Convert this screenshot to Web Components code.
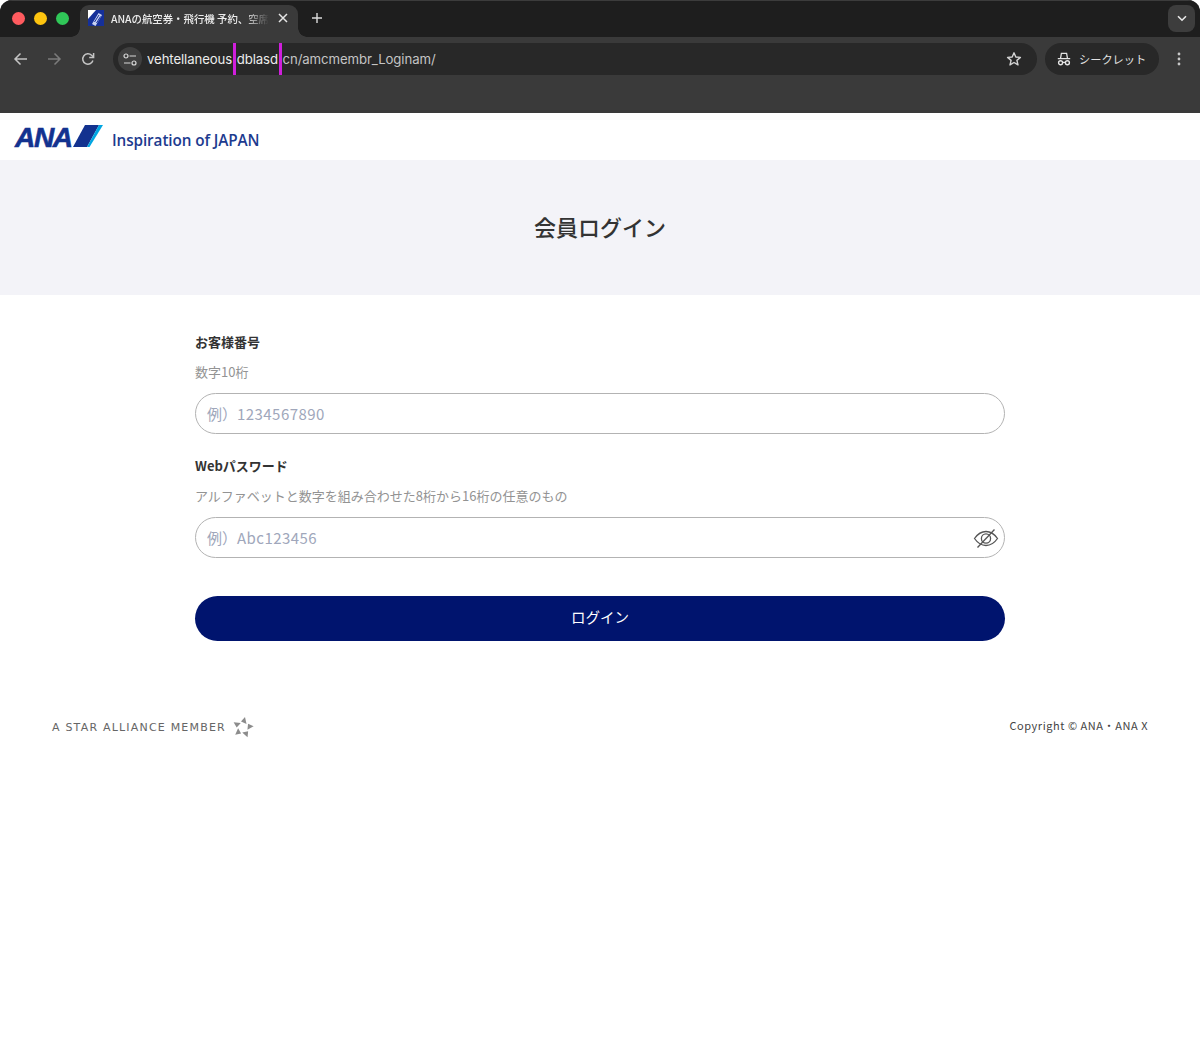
<!DOCTYPE html>
<html lang="ja">
<head>
<meta charset="utf-8">
<title>会員ログイン</title>
<style>
  html, body { margin: 0; background: #fff; }
  body { font-family: "Noto Sans CJK JP", "Noto Sans", sans-serif; min-height: 1060px; }
</style>
</head>
<body>
<browser-chrome></browser-chrome>
<site-header></site-header>
<page-title>会員ログイン</page-title>
<login-form></login-form>
<site-footer></site-footer>

<script>
const JP = `"Noto Sans CJK JP", "Noto Sans", sans-serif`;

class BrowserChrome extends HTMLElement {
    constructor() {
        super();
        this.attachShadow({ mode: "open" });
        this.shadowRoot.innerHTML = `
            <style>
                :host { display: block; background: #fff; color: #e6e6e6; font-family: ${JP}; }
                .window { height: 113px; display: flex; flex-direction: column; background: #3a3a3a; border-radius: 12px 12px 0 0; overflow: hidden; box-sizing: border-box; }
                .strip { height: 37px; flex: none; background: #1e1e1e; display: flex; align-items: flex-end; box-sizing: border-box; border-top: 1px solid #3c3c3c; }
                .lights { width: 80px; height: 36px; flex: none; display: flex; align-items: center; gap: 9px; padding: 0 0 1px 12px; box-sizing: border-box; }
                .lights i { width: 13px; height: 13px; border-radius: 50%; }
                .tab { position: relative; width: 218px; height: 32px; flex: none; background: #3a3a3a; border-radius: 9px 9px 0 0; display: flex; align-items: center; padding: 0 10px 6px 8px; box-sizing: border-box; gap: 7px; }
                .tab::before, .tab::after { content: ""; position: absolute; bottom: 0; width: 9px; height: 9px; background: radial-gradient(circle at 0 0, #1e1e1e 8.5px, #3a3a3a 9px); }
                .tab::before { left: -9px; }
                .tab::after { right: -9px; transform: scaleX(-1); }
                .tab .title { flex: 1; font-size: 10.4px; font-weight: 500; white-space: nowrap; color: #ececec; -webkit-mask-image: linear-gradient(90deg, #000 84%, transparent 100%); mask-image: linear-gradient(90deg, #000 84%, transparent 100%); margin-right: 2px; }
                .plus { margin-left: 13px; height: 26px; padding-bottom: 6px; display: flex; align-items: center; }
                .spacer { flex: 1; }
                .expand { width: 27px; height: 27px; margin: 0 5px 5px 0; border-radius: 8px; background: #3d3d3d; display: flex; align-items: center; justify-content: center; }
                .toolbar { height: 38px; flex: none; display: flex; align-items: center; padding: 6px 0 0 0; box-sizing: border-box; }
                .nav { display: flex; width: 113px; flex: none; align-items: center; padding-left: 13px; gap: 19px; box-sizing: border-box; }
                .omni { width: 924px; height: 32px; flex: none; background: #282828; border-radius: 16px; display: flex; align-items: center; box-sizing: border-box; padding-left: 5px; }
                .tune { width: 24px; height: 24px; border-radius: 50%; background: #3f3f3f; display: flex; align-items: center; justify-content: center; flex: none; margin-right: 5px; }
                .url { font-size: 13.2px; display: flex; align-items: center; height: 32px; color: #c4c4c4; font-family: "Inter", "Noto Sans", sans-serif; letter-spacing: -0.1px; white-space: nowrap; flex: 1; }
                .url b, .url span { font-weight: 400; padding-bottom: 1px; }
                .url b { color: #ececec; }
                .url u { display: block; width: 3px; height: 32px; background: #d01fdc; margin: 0 0.8px; flex: none; }
                .star { margin-right: 15px; display: flex; }
                .incog { margin-left: 8px; width: 114px; height: 32px; border-radius: 16px; background: #282828; flex: none; display: flex; align-items: center; padding-left: 12px; gap: 8px; box-sizing: border-box; font-size: 11.2px; color: #e2e2e2; }
                .menu { margin-left: 18px; display: flex; }
            </style>
            <div class="window">
                <div class="strip">
                    <div class="lights"><i style="background:#ff5b5f"></i><i style="background:#fdc40f"></i><i style="background:#30c758"></i></div>
                    <div class="tab">
                        <svg width="16" height="16" viewBox="0 0 16 16"><rect width="16" height="16" fill="#fff"/><path d="M0 16 L0 9 L8 0 L16 0 L16 16 Z" fill="#15309a"/><path d="M4 14 L10.5 3 L14 5 L7.5 16 Z" fill="#c9d3f2"/><path d="M6.5 12 L11 5 M8.5 13 L12.5 6.5" stroke="#15309a" stroke-width="1"/></svg>
                        <span class="title">ANAの航空券・飛行機 予約、空席</span>
                        <svg width="10" height="10" viewBox="0 0 10 10"><path d="M1 1 L9 9 M9 1 L1 9" stroke="#e6e6e6" stroke-width="1.5" fill="none"/></svg>
                    </div>
                    <div class="plus"><svg width="12" height="12" viewBox="0 0 12 12"><path d="M6 1 V11 M1 6 H11" stroke="#dcdcdc" stroke-width="1.4" fill="none"/></svg></div>
                    <div class="spacer"></div>
                    <div class="expand"><svg width="10" height="7" viewBox="0 0 10 7"><path d="M1 1.2 L5 5.2 L9 1.2" stroke="#e8e8e8" stroke-width="1.6" fill="none"/></svg></div>
                </div>
                <div class="toolbar">
                    <div class="nav">
                        <svg width="15" height="14" viewBox="0 0 15 14"><path d="M14 7 H2 M7.5 1.5 L2 7 L7.5 12.5" stroke="#c4c4c4" stroke-width="1.5" fill="none"/></svg>
                        <svg width="15" height="14" viewBox="0 0 15 14"><path d="M1 7 H13 M7.5 1.5 L13 7 L7.5 12.5" stroke="#7b7b7b" stroke-width="1.5" fill="none"/></svg>
                        <svg width="14" height="14" viewBox="0 0 14 14"><path d="M11.9 8.6 A5.2 5.2 0 1 1 10.6 3.3 L12.4 5" stroke="#c4c4c4" stroke-width="1.5" fill="none"/><path d="M12.6 1 V5.4 H8.2" stroke="#c4c4c4" stroke-width="1.5" fill="none"/></svg>
                    </div>
                    <div class="omni">
                        <div class="tune"><svg width="14" height="13" viewBox="0 0 14 13"><circle cx="3" cy="3" r="2" fill="none" stroke="#d8d8d8" stroke-width="1.2"/><path d="M6.5 3 H13 M1 10 H7.5" stroke="#d8d8d8" stroke-width="1.2"/><circle cx="11" cy="10" r="2" fill="none" stroke="#d8d8d8" stroke-width="1.2"/></svg></div>
                        <div class="url"><b>vehtellaneous</b><u></u><b>dblasd</b><u></u><span>cn/amcmembr_Loginam/</span></div>
                        <div class="star"><svg width="16" height="16" viewBox="0 0 16 16"><path d="M8 1.8 L9.8 6 L14.4 6.4 L10.9 9.4 L12 13.9 L8 11.5 L4 13.9 L5.1 9.4 L1.6 6.4 L6.2 6 Z" fill="none" stroke="#d4d4d4" stroke-width="1.4" stroke-linejoin="round"/></svg></div>
                    </div>
                    <div class="incog">
                        <svg width="14" height="14" viewBox="0 0 14 14"><path d="M3.6 6 L4.4 1.4 H9.6 L10.4 6" fill="none" stroke="#e4e4e4" stroke-width="1.3"/><path d="M0.8 6.6 H13.2" stroke="#e4e4e4" stroke-width="1.4" fill="none"/><circle cx="3.6" cy="10.8" r="2" fill="none" stroke="#e4e4e4" stroke-width="1.4"/><circle cx="10.4" cy="10.8" r="2" fill="none" stroke="#e4e4e4" stroke-width="1.4"/><path d="M5.6 10.4 H8.4" stroke="#e4e4e4" stroke-width="1.2"/></svg>
                        <span>シークレット</span>
                    </div>
                    <div class="menu"><svg width="4" height="14" viewBox="0 0 4 14"><circle cx="2" cy="2" r="1.4" fill="#c8c8c8"/><circle cx="2" cy="7" r="1.4" fill="#c8c8c8"/><circle cx="2" cy="12" r="1.4" fill="#c8c8c8"/></svg></div>
                </div>
                <div style="flex:1"></div>
            </div>
        `;
    }
}

class SiteHeader extends HTMLElement {
    constructor() {
        super();
        this.attachShadow({ mode: "open" });
        this.shadowRoot.innerHTML = `
            <style>
                :host { display: flex; height: 47px; align-items: center; padding-left: 15px; box-sizing: border-box; background: #fff; }
                .ana { font: italic 700 28px/1 "Liberation Sans", sans-serif; color: #13328f; -webkit-text-stroke: 0.6px #13328f; letter-spacing: -1.3px; width: 57px; flex: none; padding-top: 3px; }
                .tag { margin-left: 9px; font: 600 15.3px/1 "Open Sans", "Noto Sans", sans-serif; color: #1d3b8f; letter-spacing: -0.1px; padding-top: 8px; }
                svg { flex: none; margin-bottom: 1px; }
            </style>
            <span class="ana">ANA</span>
            <svg width="31" height="24" viewBox="0 0 31 24"><path d="M1 23 L13 1 L27 1 L15 23 Z" fill="#13328f"/><path d="M15 23 L17.5 23 L31 1 L27 1 Z" fill="#00a6e2"/></svg>
            <span class="tag">Inspiration of JAPAN</span>
        `;
    }
}

class PageTitle extends HTMLElement {
    constructor() {
        super();
        this.attachShadow({ mode: "open" });
        this.shadowRoot.innerHTML = `
            <style>
                :host { display: flex; height: 135px; padding-bottom: 4px; box-sizing: border-box; align-items: center; justify-content: center; background: #f3f3f8; color: #333; font: 500 22px/1 ${JP}; }
            </style>
            <slot></slot>
        `;
    }
}

class FormField extends HTMLElement {
    static get observedAttributes() { return ["label", "hint", "example", "secret"]; }

    constructor() {
        super();
        this.attachShadow({ mode: "open" });
        this.shadowRoot.innerHTML = `
            <style>
                :host { display: block; font-family: ${JP}; }
                .label { font-size: 13px; font-weight: 700; line-height: 18px; color: #333; }
                .hint { font-size: 13px; line-height: 20px; margin-top: 11px; color: #939393; }
                .box { position: relative; margin-top: 11px; height: 41px; border: 1px solid #b3b3b3; border-radius: 21px; display: flex; align-items: center; padding: 0 0 1px 11px; box-sizing: border-box; font-size: 15px; color: #a0a7bb; background: #fff; }
                .ph { letter-spacing: 0.45px; }
                svg { position: absolute; right: 5px; top: 9px; }
            </style>
            <div class="label"></div>
            <div class="hint"></div>
            <div class="box"><span>例）</span><span class="ph"></span></div>
        `;
    }

    attributeChangedCallback(name, oldValue, newValue) {
        if (name === "label") this.shadowRoot.querySelector(".label").textContent = newValue;
        if (name === "hint") this.shadowRoot.querySelector(".hint").textContent = newValue;
        if (name === "example") this.shadowRoot.querySelector(".ph").textContent = newValue;
        if (name === "secret") {
            this.shadowRoot.querySelector(".box").insertAdjacentHTML("beforeend", `
                <svg width="26" height="22" viewBox="0 0 26 22"><path d="M1.5 11.5 C5 6.5 9 4.5 13 4.5 C17 4.5 21 6.5 24.5 11.5 C21 16.5 17 18.5 13 18.5 C9 18.5 5 16.5 1.5 11.5 Z" fill="none" stroke="#555" stroke-width="1.3"/><circle cx="13" cy="11.5" r="4.6" fill="none" stroke="#555" stroke-width="1.3"/><path d="M4.5 20.5 L21.5 2.5" stroke="#555" stroke-width="1.3"/></svg>
            `);
        }
    }
}

class LoginForm extends HTMLElement {
    constructor() {
        super();
        this.attachShadow({ mode: "open" });
        this.shadowRoot.innerHTML = `
            <style>
                :host { display: block; width: 810px; margin: 0 auto; padding-top: 38px; }
                .second { margin-top: 23px; }
                .submit { margin-top: 38px; height: 45px; padding-bottom: 2px; box-sizing: border-box; border-radius: 23px; background: #00146e; color: #fff; display: flex; align-items: center; justify-content: center; font: 400 14.5px/1 ${JP}; }
            </style>
            <form-field label="お客様番号" hint="数字10桁" example="1234567890"></form-field>
            <form-field class="second" label="Webパスワード" hint="アルファベットと数字を組み合わせた8桁から16桁の任意のもの" example="Abc123456" secret="1"></form-field>
            <div class="submit">ログイン</div>
        `;
    }
}

class SiteFooter extends HTMLElement {
    constructor() {
        super();
        this.attachShadow({ mode: "open" });
        const wedge = "M13 1 L14.5 8 L9 5.5 Z";
        this.shadowRoot.innerHTML = `
            <style>
                :host { display: flex; align-items: center; justify-content: space-between; padding: 0 52px; margin-top: 74px; height: 24px; color: #444; }
                .member { display: flex; align-items: center; gap: 6px; font: 400 11px/24px "DejaVu Sans", sans-serif; letter-spacing: 1.2px; color: #666; }
                .member span { padding-top: 2px; }
                .copy { font: 400 11px/24px ${JP}; color: #444; letter-spacing: 0.55px; padding-bottom: 4px; }
            </style>
            <div class="member">
                <span>A STAR ALLIANCE MEMBER</span>
                <svg width="22" height="22" viewBox="0 0 22 22"><g fill="#8c8c8c">
                    <path d="${wedge}"/>
                    <path d="${wedge}" transform="rotate(72 11 11.5)"/>
                    <path d="${wedge}" transform="rotate(144 11 11.5)"/>
                    <path d="${wedge}" transform="rotate(216 11 11.5)"/>
                    <path d="${wedge}" transform="rotate(288 11 11.5)"/>
                </g></svg>
            </div>
            <div class="copy">Copyright © ANA・ANA X</div>
        `;
    }
}

customElements.define("browser-chrome", BrowserChrome);
customElements.define("site-header", SiteHeader);
customElements.define("page-title", PageTitle);
customElements.define("form-field", FormField);
customElements.define("login-form", LoginForm);
customElements.define("site-footer", SiteFooter);
</script>
</body>
</html>
